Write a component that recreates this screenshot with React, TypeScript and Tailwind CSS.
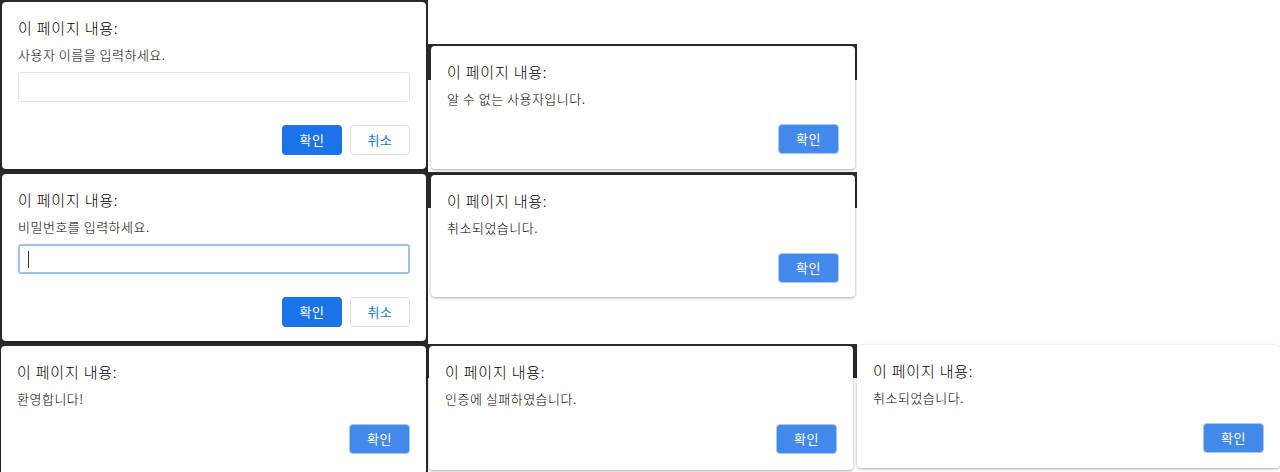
import React from "react";

const FONT = "font-['Noto_Sans_CJK_KR','Noto_Sans',sans-serif]";

interface DialogProps {
  message: string;
  prompt?: boolean;
  focused?: boolean;
  className?: string;
}

function Dialog({ message, prompt = false, focused = false, className = "" }: DialogProps) {
  return (
    <div
      className={`flex flex-col bg-white rounded-[4px] pt-4 pl-4 pr-4 pb-[14px] shadow-[0_1px_3px_rgba(0,0,0,0.35)] ${className}`}
    >
      <div className="h-5 text-[15px] leading-5 tracking-[0.8px] font-light text-[#000]">
        이 페이지 내용:
      </div>
      <div className="mt-[7px] h-5 text-[13px] leading-5 tracking-[0.5px] font-light text-[#000]">
        {message}
      </div>
      {prompt && (
        <div
          className={`mt-[7px] h-[30px] rounded-[3px] flex items-center px-2 ${
            focused ? "border-2 border-[#9fc0f5]" : "border border-[#e3e3e3]"
          }`}
        >
          {focused && <span className="block w-px h-[17px] bg-[#333]" />}
        </div>
      )}
      <div className={`flex justify-end gap-2 ${prompt ? "mt-[23px]" : "mt-[15px]"}`}>
        {prompt ? (
          <>
            <button className="w-[60px] h-[30px] rounded-[4px] bg-[#1a73e8] text-white text-[13px] tracking-[0.5px]">
              확인
            </button>
            <button className="w-[60px] h-[30px] rounded-[4px] bg-white border border-[#e0e0e0] text-[#1a73e8] text-[13px] tracking-[0.5px]">
              취소
            </button>
          </>
        ) : (
          <button className="w-[61px] h-[30px] rounded-[4px] bg-[#4389ea] border border-[#a9c8f5] text-white text-[13px] tracking-[0.5px]">
            확인
          </button>
        )}
      </div>
    </div>
  );
}

export default function App() {
  return (
    <div className={`flex w-[1280px] h-[472px] overflow-hidden bg-white ${FONT}`}>
      {/* left column: two prompts and one alert */}
      <div className="flex flex-col w-[428px] shrink-0">
        <div className="h-[172px] bg-[#2b2b2b] pt-[2px] px-[2px] pb-[3px]">
          <Dialog message="사용자 이름을 입력하세요." prompt className="h-full" />
        </div>
        <div className="h-[172px] bg-[#2b2b2b] pt-[2px] px-[2px] pb-[3px]">
          <Dialog message="비밀번호를 입력하세요." prompt focused className="h-full" />
        </div>
        <div className="h-[128px] bg-[#2b2b2b] pt-[2px] pl-[1px] pr-[2px]">
          <Dialog message="환영합니다!" className="h-[126px] !rounded-b-none" />
        </div>
      </div>

      {/* middle column */}
      <div className="flex flex-col w-[429px] shrink-0">
        <div className="h-[44px]" />
        <div className="h-[128px] bg-[linear-gradient(#2b2b2b_0_36px,#fff_36px)] pt-[2px] pl-[3px] pr-[2px] pb-[4px]">
          <Dialog message="알 수 없는 사용자입니다." className="h-[123px]" />
        </div>
        <div className="h-[128px] bg-[linear-gradient(#2b2b2b_0_36px,#fff_36px)] pt-[3px] pl-[3px] pr-[2px]">
          <Dialog message="취소되었습니다." className="h-[122px]" />
        </div>
        <div className="h-[44px]" />
        <div className="h-[128px] bg-[linear-gradient(#2b2b2b_0_34px,#fff_34px)] pt-[2px] pl-[1px] pr-[4px]">
          <Dialog message="인증에 실패하였습니다." className="h-[124px]" />
        </div>
      </div>

      {/* right column */}
      <div className="flex flex-col flex-1">
        <div className="h-[345px]" />
        <Dialog message="취소되었습니다." className="h-[123px]" />
      </div>
    </div>
  );
}
